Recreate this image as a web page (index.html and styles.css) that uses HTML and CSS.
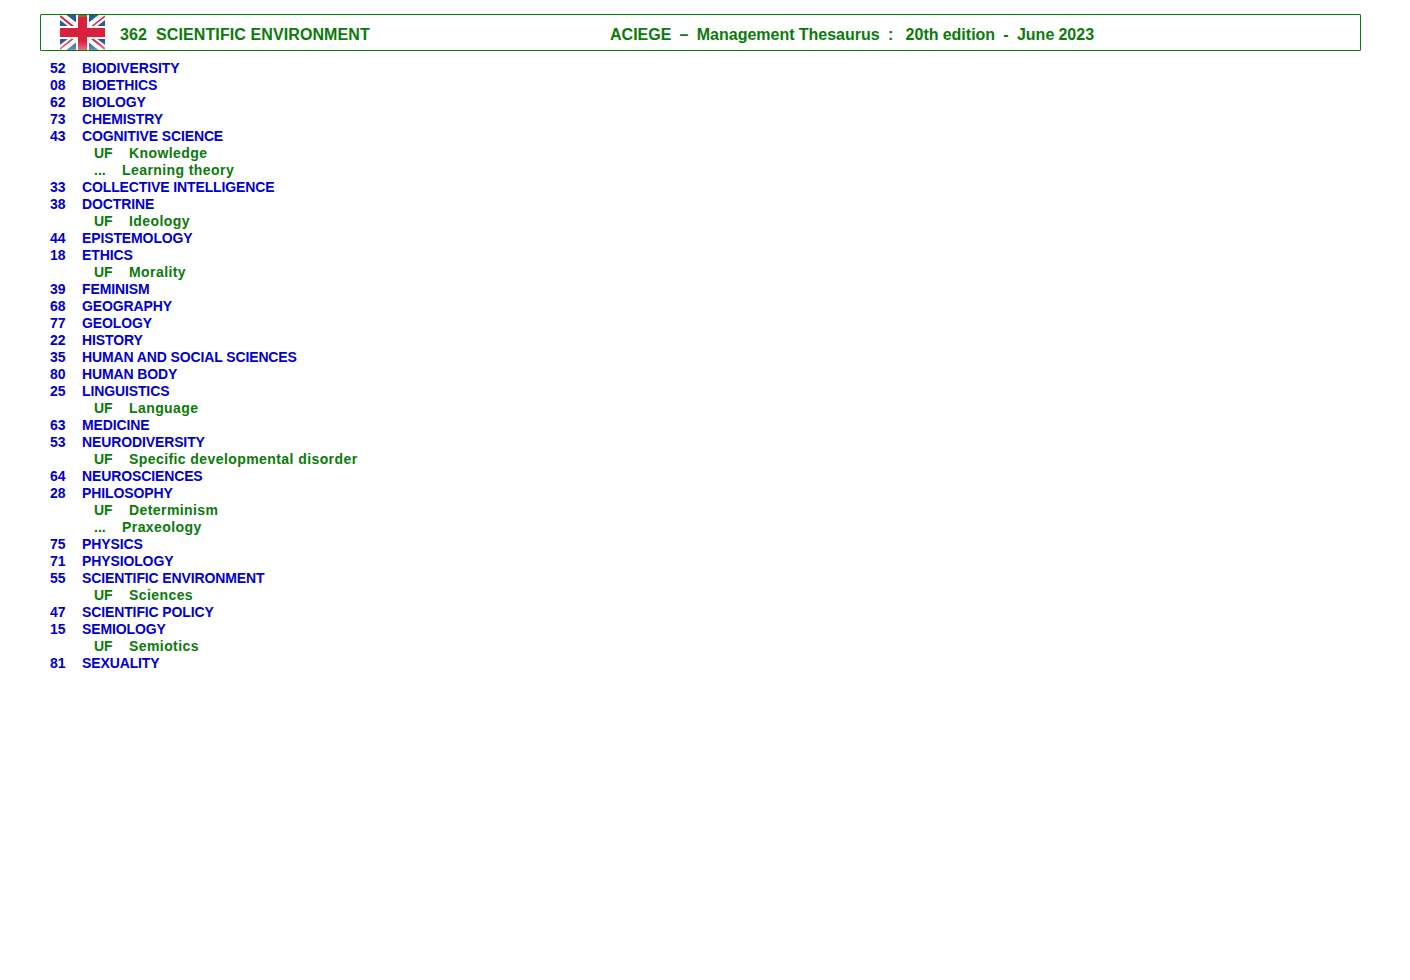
FILE: index.html
```html
<!DOCTYPE html>
<html lang="en">
<head>
<meta charset="utf-8">
<title>362 Scientific Environment</title>
<link rel="stylesheet" href="styles.css">
</head>
<body>
<header class="banner">
<svg class="flag" viewBox="0 0 45 35" width="45" height="35" aria-hidden="true">
<defs><linearGradient id="sheen" x1="0" y1="0" x2="0" y2="1"><stop offset="0" stop-color="#fff" stop-opacity="0"/><stop offset=".75" stop-color="#fff" stop-opacity="0"/><stop offset="1" stop-color="#fff" stop-opacity=".35"/></linearGradient></defs>
<rect width="45" height="35" fill="#2b5a9c"/>
<path d="M0 0 L45 35 M45 0 L0 35" stroke="#fff" stroke-width="8"/>
<path d="M0 1 L20 17 M45 34 L25 18" stroke="#d8203c" stroke-width="2"/>
<path d="M45 1 L25 17 M0 34 L20 18" stroke="#d8203c" stroke-width="1.6"/>
<path d="M22.5 0 V35 M0 17.5 H45" stroke="#fff" stroke-width="13"/>
<path d="M22.5 0 V35 M0 17.5 H45" stroke="#d9203c" stroke-width="9"/>
<rect x="18" width="9" height="2" fill="#8f6a3c"/>
<rect width="45" height="35" fill="url(#sheen)"/>
</svg>
<span class="banner-title">362&nbsp; SCIENTIFIC ENVIRONMENT</span>
<span class="banner-edition">ACIEGE &nbsp;&ndash;&nbsp; Management Thesaurus &nbsp;:&nbsp;&nbsp; 20th edition &nbsp;-&nbsp; June 2023</span>
</header>
<main class="list">
<div class="row"><span class="num">52</span>BIODIVERSITY</div>
<div class="row"><span class="num">08</span>BIOETHICS</div>
<div class="row"><span class="num">62</span>BIOLOGY</div>
<div class="row"><span class="num">73</span>CHEMISTRY</div>
<div class="row"><span class="num">43</span>COGNITIVE SCIENCE</div>
<div class="sub"><span class="uf">UF</span>Knowledge</div>
<div class="sub"><span class="dots">...</span>Learning theory</div>
<div class="row"><span class="num">33</span>COLLECTIVE INTELLIGENCE</div>
<div class="row"><span class="num">38</span>DOCTRINE</div>
<div class="sub"><span class="uf">UF</span>Ideology</div>
<div class="row"><span class="num">44</span>EPISTEMOLOGY</div>
<div class="row"><span class="num">18</span>ETHICS</div>
<div class="sub"><span class="uf">UF</span>Morality</div>
<div class="row"><span class="num">39</span>FEMINISM</div>
<div class="row"><span class="num">68</span>GEOGRAPHY</div>
<div class="row"><span class="num">77</span>GEOLOGY</div>
<div class="row"><span class="num">22</span>HISTORY</div>
<div class="row"><span class="num">35</span>HUMAN AND SOCIAL SCIENCES</div>
<div class="row"><span class="num">80</span>HUMAN BODY</div>
<div class="row"><span class="num">25</span>LINGUISTICS</div>
<div class="sub"><span class="uf">UF</span>Language</div>
<div class="row"><span class="num">63</span>MEDICINE</div>
<div class="row"><span class="num">53</span>NEURODIVERSITY</div>
<div class="sub"><span class="uf">UF</span>Specific developmental disorder</div>
<div class="row"><span class="num">64</span>NEUROSCIENCES</div>
<div class="row"><span class="num">28</span>PHILOSOPHY</div>
<div class="sub"><span class="uf">UF</span>Determinism</div>
<div class="sub"><span class="dots">...</span>Praxeology</div>
<div class="row"><span class="num">75</span>PHYSICS</div>
<div class="row"><span class="num">71</span>PHYSIOLOGY</div>
<div class="row"><span class="num">55</span>SCIENTIFIC ENVIRONMENT</div>
<div class="sub"><span class="uf">UF</span>Sciences</div>
<div class="row"><span class="num">47</span>SCIENTIFIC POLICY</div>
<div class="row"><span class="num">15</span>SEMIOLOGY</div>
<div class="sub"><span class="uf">UF</span>Semiotics</div>
<div class="row"><span class="num">81</span>SEXUALITY</div>
</main>
</body>
</html>
```
FILE: styles.css
```css
html, body { background: #fff; }
body {
  margin: 0;
  padding: 14px 49px 0 40px;
  font-family: "Liberation Sans", Arial, sans-serif;
  font-weight: 700;
  font-size: 14px;
  line-height: 17px;
}
.banner {
  display: flex;
  align-items: center;
  height: 35px;
  border: 1px solid #0a7a0a;
  border-radius: 1px;
  color: #0a7a0a;
  font-size: 16px;
  line-height: 18px;
}
.flag { flex: none; margin-left: 19px; }
.banner-title { width: 490px; margin-left: 15px; padding-top: 5px; white-space: pre; letter-spacing: .1px; }
.banner-edition { padding-top: 5px; white-space: pre; word-spacing: -.35px; letter-spacing: .01px; }
.list { margin-top: 9px; padding-left: 10px; }
.row { color: #0000cd; height: 17px; white-space: nowrap; letter-spacing: -.12px; }
.num { display: inline-block; width: 32px; letter-spacing: 0; }
.sub { color: #0a7a0a; height: 17px; padding-left: 44px; white-space: nowrap; letter-spacing: .42px; }
.uf { display: inline-block; width: 35px; letter-spacing: 0; }
.dots { display: inline-block; width: 28px; letter-spacing: 0; }
```
